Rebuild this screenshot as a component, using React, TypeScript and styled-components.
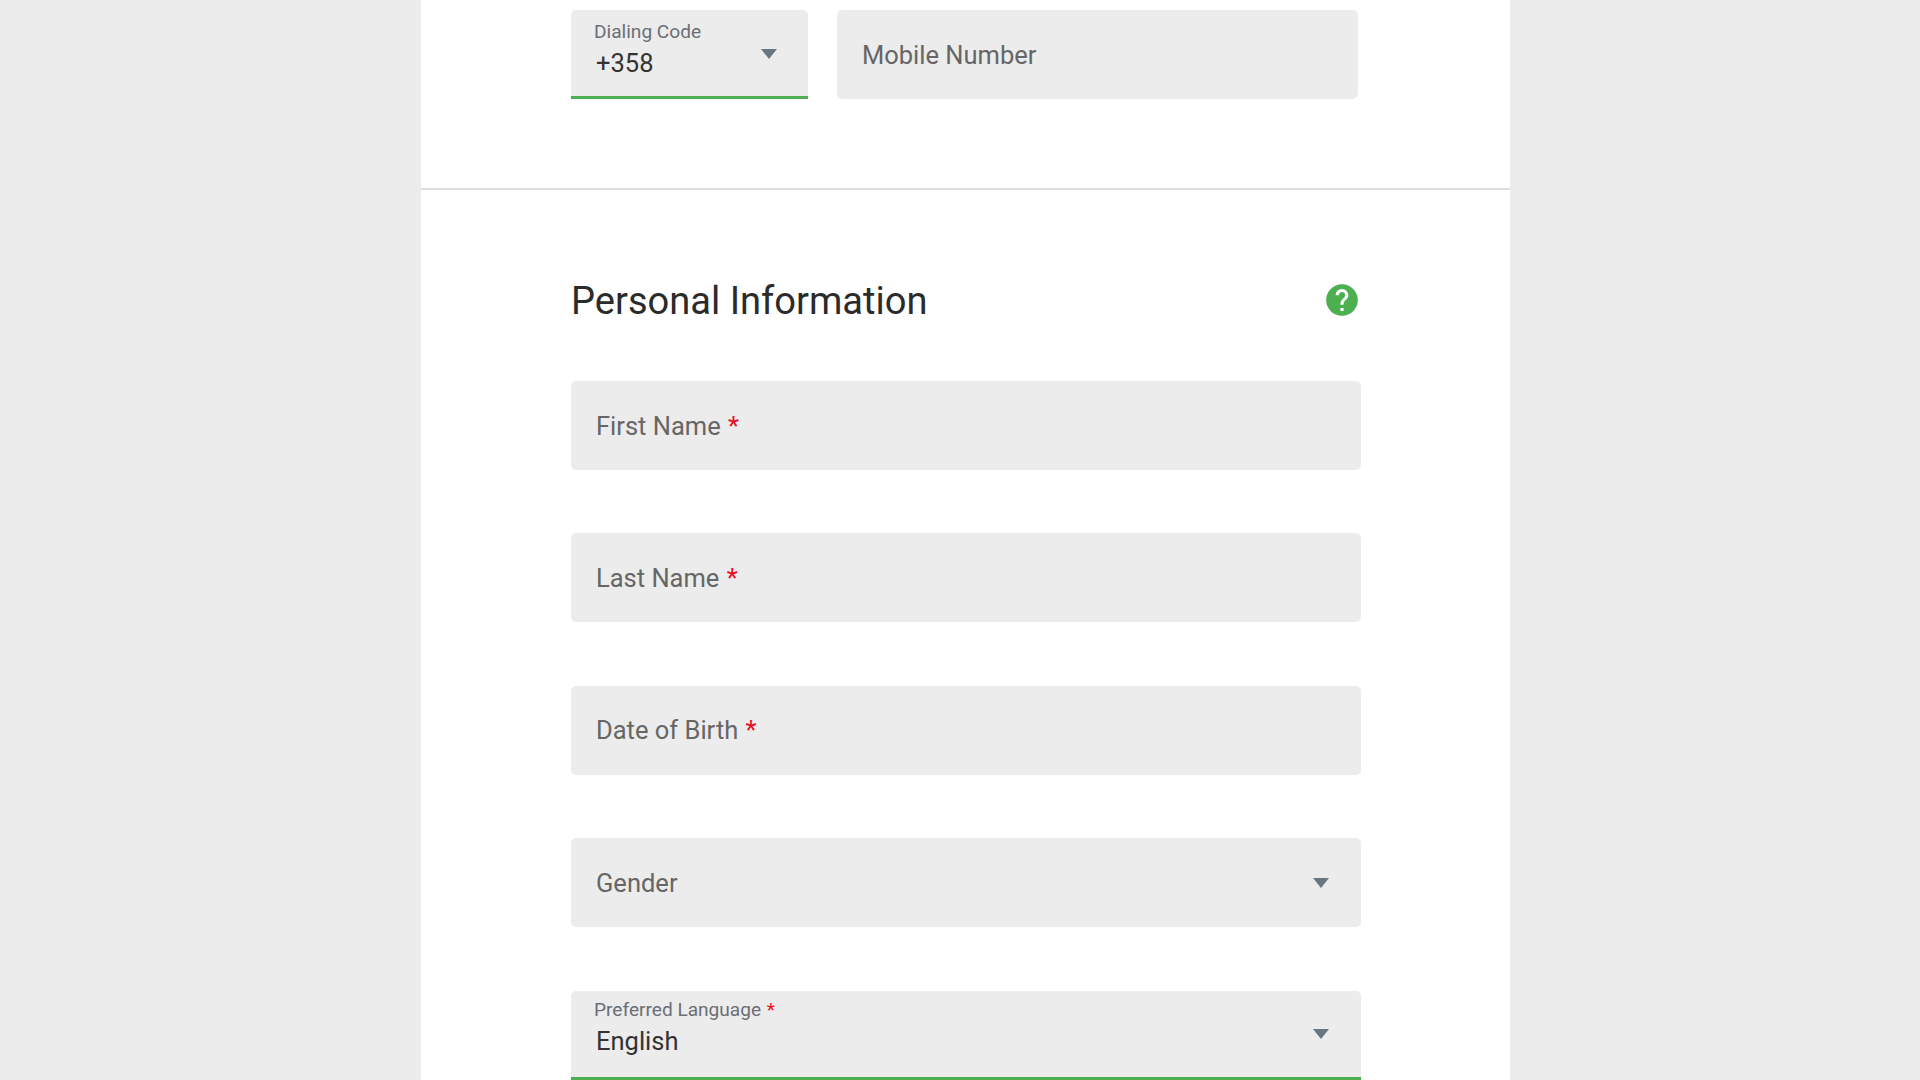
import styled, { createGlobalStyle } from "styled-components";
import { MdHelp } from "react-icons/md";

const GlobalStyle = createGlobalStyle`
  html, body {
    margin: 0;
    padding: 0;
    height: 100%;
    overflow: hidden;
    background: #ececec;
    font-family: Roboto, "Liberation Sans", sans-serif;
  }
`;

const Page = styled.div`
  height: 1080px;
  overflow: hidden;
  display: flex;
  justify-content: center;
  padding-left: 11px;
`;

const Panel = styled.main`
  width: 1089px;
  background: #fff;
`;

const PhoneSection = styled.section`
  display: flex;
  gap: 29px;
  padding: 10px 152px 89px 150px;
  border-bottom: 2px solid #dedede;
`;

const PersonalSection = styled.section`
  padding: 88px 149px 0 150px;
`;

const TitleRow = styled.div`
  display: flex;
  align-items: center;
  justify-content: space-between;
  height: 44px;
  margin-bottom: 59px;
  padding-right: 3px;
`;

const Title = styled.h2`
  margin: 1px 0 0;
  font-size: 38.1px;
  font-weight: 400;
  line-height: 44px;
  color: #2b2b2b;
`;

const HelpButton = styled.span`
  display: flex;
  margin-right: -3px;
  color: #4caf50;
  font-size: 38px;
`;

const Fields = styled.div`
  display: flex;
  flex-direction: column;
  gap: 63.4px;
`;

const Field = styled.div<{ $width?: string; $filled?: boolean; $top?: number }>`
  position: relative;
  box-sizing: border-box;
  flex: ${(p) => (p.$width ? `0 0 ${p.$width}` : "1 1 auto")};
  height: 89px;
  display: flex;
  flex-direction: column;
  justify-content: ${(p) => (p.$filled ? "flex-start" : "center")};
  padding: ${(p) => (p.$filled ? `${p.$top ?? 11}px 25px 0` : "0 25px")};
  background: #ececec;
  border-radius: 5px 5px ${(p) => (p.$filled ? "0 0" : "5px 5px")};
  border-bottom: ${(p) => (p.$filled ? "3px solid #4caf50" : "none")};
`;

const Placeholder = styled.span`
  font-size: 25.5px;
  line-height: 30px;
  color: #666;
`;

const FloatLabel = styled.span`
  font-size: 19.1px;
  line-height: 22px;
  margin-left: -2px;
  color: #6a6f75;
`;

const Value = styled.span`
  font-size: 25.5px;
  line-height: 30px;
  margin-top: 5px;
  color: #333;
`;

const Required = styled.span`
  margin-left: 1px;
  color: #ec0a1e;
`;

const Arrow = styled.span<{ $compact?: boolean }>`
  position: absolute;
  right: ${(p) => (p.$compact ? "31px" : "32px")};
  top: 50%;
  margin-top: ${(p) => (p.$compact ? "-4px" : "-5px")};
  width: 0;
  height: 0;
  border-left: 8px solid transparent;
  border-right: 8px solid transparent;
  border-top: 10px solid #687682;
`;

export default function App() {
  return (
    <>
      <GlobalStyle />
      <Page>
        <Panel>
          <PhoneSection>
            <Field $width="237px" $filled>
              <FloatLabel>Dialing Code</FloatLabel>
              <Value>+358</Value>
              <Arrow $compact />
            </Field>
            <Field>
              <Placeholder>Mobile Number</Placeholder>
            </Field>
          </PhoneSection>
          <PersonalSection>
            <TitleRow>
              <Title>Personal Information</Title>
              <HelpButton>
                <MdHelp />
              </HelpButton>
            </TitleRow>
            <Fields>
              <Field>
                <Placeholder>
                  First Name <Required>*</Required>
                </Placeholder>
              </Field>
              <Field>
                <Placeholder>
                  Last Name <Required>*</Required>
                </Placeholder>
              </Field>
              <Field>
                <Placeholder>
                  Date of Birth <Required>*</Required>
                </Placeholder>
              </Field>
              <Field>
                <Placeholder>Gender</Placeholder>
                <Arrow />
              </Field>
              <Field $filled $top={8}>
                <FloatLabel>
                  Preferred Language <Required>*</Required>
                </FloatLabel>
                <Value>English</Value>
                <Arrow />
              </Field>
            </Fields>
          </PersonalSection>
        </Panel>
      </Page>
    </>
  );
}
